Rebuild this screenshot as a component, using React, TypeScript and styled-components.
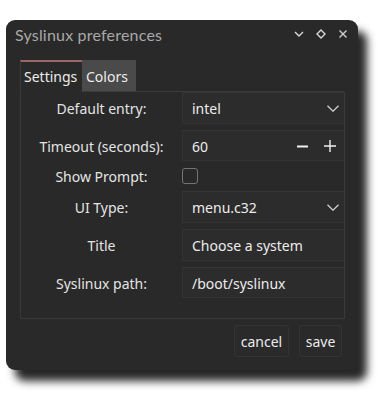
import React from "react";
import styled, { createGlobalStyle } from "styled-components";

const Global = createGlobalStyle`
  html, body { margin: 0; padding: 0; background: #ffffff; }
  body { font-family: "Noto Sans", "DejaVu Sans", sans-serif; }
  * { box-sizing: border-box; }
`;

const Page = styled.div`
  padding: 20px 0 0 6px;
  width: 385px;
  height: 401px;
`;

const Window = styled.div`
  width: 352px;
  height: 350px;
  background: #292929;
  border-radius: 9px;
  box-shadow: 9px 11px 8px rgba(0, 0, 0, 0.85);
  display: flex;
  flex-direction: column;
  color: #e6e6e6;
`;

const TitleBar = styled.div`
  height: 28px;
  display: flex;
  align-items: center;
  padding: 0 10px 0 9px;
`;

const Title = styled.div`
  flex: 1;
  font-family: "Lato", "Noto Sans", sans-serif;
  font-size: 16px;
  color: #a8a8a8;
  letter-spacing: 0.2px;
`;

const Controls = styled.div`
  display: flex;
  align-items: center;
  gap: 12px;
`;

const Body = styled.div`
  padding: 12px 14px 0 14px;
  display: flex;
  flex-direction: column;
`;

const TabBar = styled.div`
  display: flex;
  height: 32px;
`;

const Tab = styled.div<{ $active?: boolean }>`
  height: 32px;
  padding: 0 3px;
  display: flex;
  align-items: center;
  font-size: 14px;
  color: #ececec;
  background: ${(p) => (p.$active ? "#292929" : "#4a4a4a")};
  border-top: 2px solid ${(p) => (p.$active ? "#9a6767" : "#4a4a4a")};
  border-left: 1px solid ${(p) => (p.$active ? "#3a3a3a" : "#4a4a4a")};
  border-bottom: 1px solid ${(p) => (p.$active ? "#292929" : "#3a3a3a")};
  width: ${(p) => (p.$active ? "62px" : "54px")};
`;

const TabFill = styled.div`
  flex: 1;
  border-bottom: 1px solid #3a3a3a;
`;

const Panel = styled.div`
  width: 325px;
  height: 227px;
  border: 1px solid #3a3a3a;
  border-top: none;
  display: grid;
  grid-template-columns: 161px 162px;
  grid-template-rows: 32px 31px 18px 32px 32px 31px;
  row-gap: 6px;
  align-content: start;
`;

const Label = styled.div`
  font-size: 14px;
  color: #e4e4e4;
  display: flex;
  align-items: center;
  justify-content: center;
  padding-top: 1px;
`;

const Field = styled.div`
  background: #2c2c2c;
  border-top: 1px solid #353535;
  border-left: 1px solid #333333;
  border-bottom: 1px solid #323232;
  display: flex;
  align-items: center;
  padding: 1px 0 0 9px;
  font-size: 14px;
  color: #ececec;
`;

const FieldText = styled.span`
  flex: 1;
`;

const Spin = styled.div`
  display: flex;
  align-items: center;
  gap: 16px;
  padding-right: 8px;
`;

const CheckCell = styled.div`
  display: flex;
  align-items: center;
`;

const Check = styled.div`
  width: 16px;
  height: 16px;
  border: 1px solid #747474;
  border-radius: 3px;
`;

const Footer = styled.div`
  display: flex;
  justify-content: flex-end;
  gap: 10px;
  padding: 6px 16px 0 0;
`;

const Button = styled.div<{ $w: number }>`
  width: ${(p) => p.$w}px;
  height: 32px;
  border: 1px solid #343434;
  border-radius: 3px;
  background: #2a2a2a;
  display: flex;
  align-items: center;
  justify-content: center;
  font-size: 14px;
  color: #ececec;
`;

const Chevron = ({ color = "#cfcfcf", w = 12, h = 7 }: { color?: string; w?: number; h?: number }) => (
  <svg width={w} height={h} viewBox={`0 0 ${w} ${h}`}>
    <path d={`M0.5 0.8 L${w / 2} ${h - 0.8} L${w - 0.5} 0.8`} stroke={color} strokeWidth="1.3" fill="none" />
  </svg>
);

const ComboChevron = styled.div`
  padding-right: 5px;
  display: flex;
  align-items: center;
`;

export default function App() {
  return (
    <>
      <Global />
      <Page>
        <Window>
          <TitleBar>
            <Title>Syslinux preferences</Title>
            <Controls>
              <svg width="10" height="6" viewBox="0 0 10 6">
                <path d="M1 1 L5 5 L9 1" stroke="#d8d8d8" strokeWidth="1.4" fill="none" />
              </svg>
              <svg width="10" height="10" viewBox="0 0 10 10">
                <path d="M5 1 L9 5 L5 9 L1 5 Z" stroke="#d8d8d8" strokeWidth="1.4" fill="none" />
              </svg>
              <svg width="10" height="10" viewBox="0 0 10 10">
                <path d="M1.5 1.5 L8.5 8.5 M8.5 1.5 L1.5 8.5" stroke="#d0d0d0" strokeWidth="1.4" fill="none" />
              </svg>
            </Controls>
          </TitleBar>
          <Body>
            <TabBar>
              <Tab $active>Settings</Tab>
              <Tab>Colors</Tab>
              <TabFill />
            </TabBar>
            <Panel>
              <Label>Default entry:</Label>
              <Field>
                <FieldText>intel</FieldText>
                <ComboChevron>
                  <Chevron />
                </ComboChevron>
              </Field>

              <Label>Timeout (seconds):</Label>
              <Field>
                <FieldText>60</FieldText>
                <Spin>
                  <svg width="11" height="11" viewBox="0 0 11 11">
                    <path d="M0 5.5 H11" stroke="#f0f0f0" strokeWidth="2" />
                  </svg>
                  <svg width="12" height="12" viewBox="0 0 12 12">
                    <path d="M0 6 H12 M6 0 V12" stroke="#f0f0f0" strokeWidth="1.4" />
                  </svg>
                </Spin>
              </Field>

              <Label>Show Prompt:</Label>
              <CheckCell>
                <Check />
              </CheckCell>

              <Label>UI Type:</Label>
              <Field>
                <FieldText>menu.c32</FieldText>
                <ComboChevron>
                  <Chevron />
                </ComboChevron>
              </Field>

              <Label>Title</Label>
              <Field>
                <FieldText>Choose a system</FieldText>
              </Field>

              <Label>Syslinux path:</Label>
              <Field>
                <FieldText>/boot/syslinux</FieldText>
              </Field>
            </Panel>
          </Body>
          <Footer>
            <Button $w={55}>cancel</Button>
            <Button $w={43}>save</Button>
          </Footer>
        </Window>
      </Page>
    </>
  );
}
